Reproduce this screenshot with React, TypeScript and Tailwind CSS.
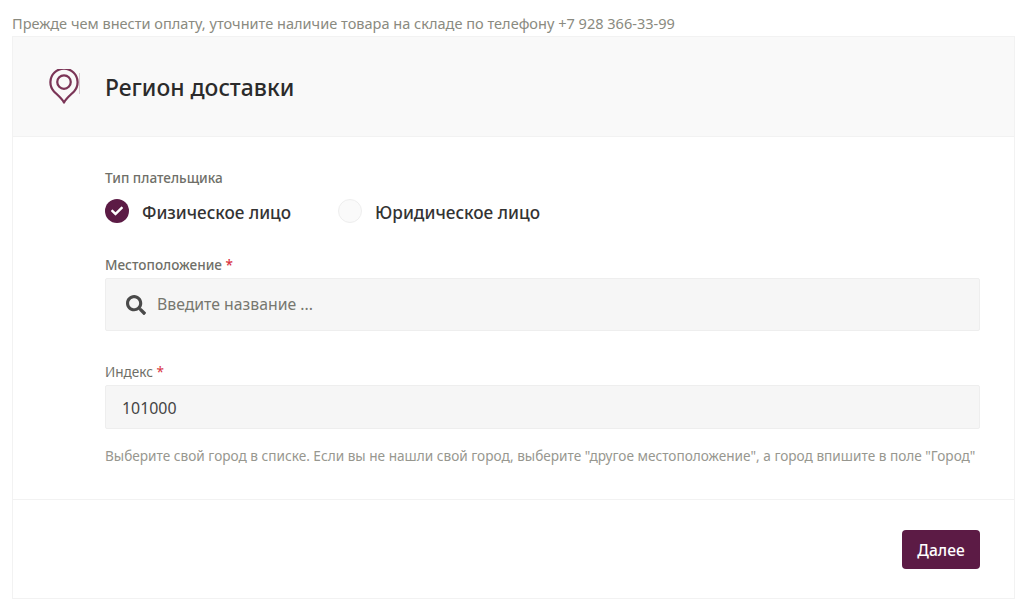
import React from "react";
import { FaCheck, FaSearch } from "react-icons/fa";

const font = "font-['Noto_Sans','Open_Sans',sans-serif]";

const Required = () => <span className="text-[#d9343f]"> *</span>;

const App: React.FC = () => {
  return (
    <div className={`h-[616px] w-[1024px] overflow-hidden bg-white pl-3 pr-[9px] pt-[14px] ${font}`}>
      <p className="h-[22px] whitespace-nowrap text-[14.55px] leading-[18px] text-[#8a8a80]">
        Прежде чем внести оплату, уточните наличие товара на складе по телефону +7 928 366-33-99
      </p>

      <div className="h-[563px] border border-[#f2f2f2]">
        <div className="flex h-[100px] items-center border-b border-[#f2f2f2] bg-[#f9f9f9]">
          <div className="ml-[36px] flex h-[36px] w-[32px] items-start">
            <svg width="30" height="35" viewBox="0 0 30 35" fill="none" stroke="#7b3557" strokeWidth="2.25">
              <path d="M15 33.5 C13 29.5 8 25.5 5 22.5 A13.6 13.6 0 1 1 25 22.5 C22 25.5 17 29.5 15 33.5 Z" strokeLinejoin="round" />
              <circle cx="15" cy="13" r="6.75" />
            </svg>
            <div className="mt-[4px] h-[21px] w-px bg-[#d8c8d0]" />
          </div>
          <h2 className="ml-[24px] mt-[4px] text-[22.9px] font-medium text-[#2b2b2b]">Регион доставки</h2>
        </div>

        <div className="h-[363px] border-b border-[#f2f2f2] pl-[92px] pr-[34px] pt-[32px]">
          <div className="text-[13.6px] font-medium leading-[18px] text-[#6f6f68]">Тип плательщика</div>

          <div className="mt-[11px] flex h-[26px] items-center">
            <span className="flex h-6 w-6 items-center justify-center rounded-full bg-[#5c1b45]">
              <FaCheck size={12} className="text-white" />
            </span>
            <span className="ml-[13px] mt-[4px] text-[17.15px] font-medium text-[#333333]">Физическое лицо</span>
            <span className="ml-[47px] h-6 w-6 rounded-full border border-[#eeeeee] bg-[#fafafa]" />
            <span className="ml-[13px] mt-[4px] text-[17.2px] font-medium text-[#333333]">Юридическое лицо</span>
          </div>

          <div className="mt-[32px] text-[13.6px] font-medium leading-[18px] text-[#6f6f68]">
            Местоположение
            <Required />
          </div>
          <div className="mt-[4px] flex h-[53px] items-center rounded-[2px] border border-[#eeeeee] bg-[#f6f6f6] pl-[20px]">
            <FaSearch size={20} className="text-[#4a4a4a]" />
            <span className="ml-[11px] text-[15.8px] text-[#77776f]">Введите название ...</span>
          </div>

          <div className="mt-[32px] text-[13.6px] leading-[18px] text-[#6f6f68]">
            Индекс
            <Required />
          </div>
          <div className="mt-[4px] flex h-[44px] items-center rounded-[2px] border border-[#eeeeee] bg-[#f6f6f6] pl-[16px] pt-[3px] text-[15.9px] text-[#444444]">
            101000
          </div>

          <p className="mt-[18px] whitespace-nowrap text-[13.63px] leading-[18px] text-[#97978f]">
            Выберите свой город в списке. Если вы не нашли свой город, выберите "другое местоположение", а город впишите в поле "Город"
          </p>
        </div>

        <div className="flex justify-end pr-[34px] pt-[30px]">
          <button className="h-[39px] w-[78px] rounded-[4px] bg-[#5c1b45] pt-[2px] text-[15.6px] font-medium text-white">
            Далее
          </button>
        </div>
      </div>
    </div>
  );
};

export default App;
